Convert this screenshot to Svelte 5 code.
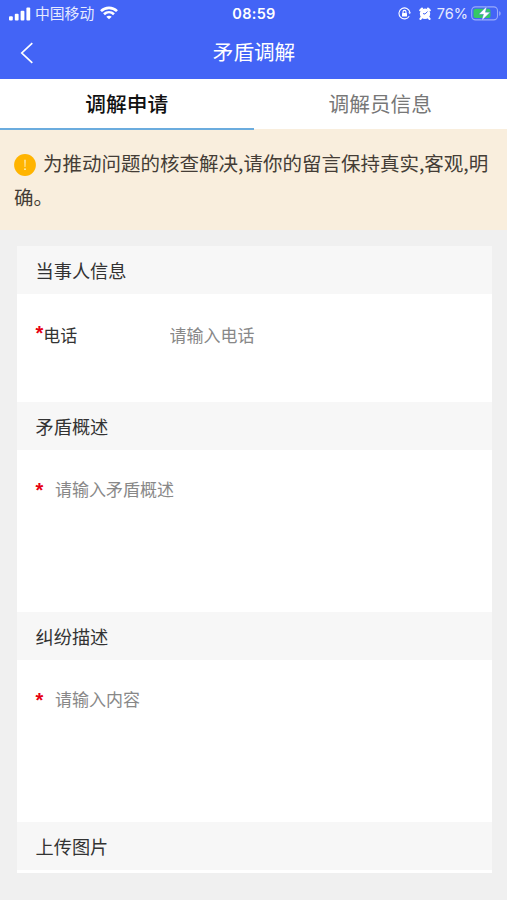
<script>
  let activeTab = $state(0);
  let phone = $state('');
  let summary = $state('');
  let detail = $state('');

  const tabs = ['调解申请', '调解员信息'];
</script>

<div class="page">
  <header>
    <div class="status">
      <div class="carrier">
        <svg width="22" height="14" viewBox="0 0 22 14" fill="#fff">
          <rect x="0" y="9.2" width="3.8" height="4.3" rx="1" />
          <rect x="5.8" y="6.8" width="3.8" height="6.7" rx="1" />
          <rect x="11.6" y="3.8" width="3.8" height="9.7" rx="1" />
          <rect x="17.4" y="0.5" width="3.8" height="13" rx="1" />
        </svg>
        <span>中国移动</span>
        <svg class="wifi" width="18" height="14" viewBox="0 0 18 14" fill="none" stroke="#fff">
          <path d="M1 5.1C5.5.7 12.5.7 17 5.1" stroke-width="2.7" />
          <path d="M4 8.3c2.9-2.7 7.1-2.7 10 0" stroke-width="2.6" />
          <path d="M9 13.3 6.3 10.7c1.5-1.4 3.9-1.4 5.4 0z" fill="#fff" stroke="none" />
        </svg>
      </div>
      <span class="time">08:59</span>
      <div class="device">
        <svg width="13" height="13" viewBox="0 0 13 13" fill="none" stroke="#fff" stroke-width="1.1">
          <path d="M11.9 5.3A5.5 5.5 0 1 0 11.2 9.3" />
          <path d="M10.3 5.2h2.5l-.9 2z" fill="#fff" stroke="none" />
          <rect x="4" y="5.9" width="5" height="3.5" rx=".5" fill="#fff" stroke="none" />
          <path d="M5 6V4.9a1.5 1.5 0 0 1 3 0V6" />
        </svg>
        <svg class="alarm" width="12" height="13" viewBox="0 0 12 13">
          <circle cx="6" cy="6.8" r="5.2" fill="#fff" />
          <path d="M1.3 3.2 3 1.6M10.7 3.2 9 1.6M2.5 10.5 1.5 11.9M9.5 10.5l1 1.4" stroke="#fff" stroke-width="2.2" stroke-linecap="round" />
          <path d="M8.5 4.5 6 7.1 4 6.5" fill="none" stroke="#4364f6" stroke-width="1" />
        </svg>
        <span class="percent">76%</span>
        <svg width="31" height="15" viewBox="0 0 31 15">
          <rect x=".7" y=".9" width="25.8" height="13" rx="3.8" fill="none" stroke="#9aabfa" stroke-width="1.1" />
          <path d="M28.2 5.2v4.5c1.9-.6 1.9-3.9 0-4.500z" fill="#9aabfa" />
          <rect x="2.5" y="2.7" width="17" height="9.4" rx="2" fill="#35c863" />
          <path d="M15.8.3 7.800 8.300h4.700L10.600 14.700l8.600-8.500h-4.800z" fill="#fff" stroke="#4364f6" stroke-width=".4" />
        </svg>
      </div>
    </div>
    <div class="nav">
      <button class="back" aria-label="返回">
        <svg width="14" height="22" viewBox="0 0 14 22" fill="none" stroke="#fff" stroke-width="1.7">
          <path d="M12.3 1.2 1.8 11 12.3 20.8" />
        </svg>
      </button>
      <h1>矛盾调解</h1>
    </div>
  </header>

  <nav class="tabs">
    {#each tabs as tab, i}
      <button class:active={activeTab === i} onclick={() => (activeTab = i)}>{tab}</button>
    {/each}
  </nav>

  <p class="notice">
    <svg class="warn" width="22" height="22" viewBox="0 0 22 22">
      <circle cx="11" cy="11" r="10.9" fill="#ffb400" />
      <path d="M10.3 5.8h1.4l-.3 7.2h-.8z" fill="#fff0c4" />
      <circle cx="11" cy="15.2" r=".9" fill="#fff0c4" />
    </svg>为推动问题的核查解决,请你的留言保持真实,客观,明确。
  </p>

  <main>
    <h2>当事人信息</h2>
    <div class="row">
      <label for="phone"><span class="required">*</span>电话</label>
      <input id="phone" type="tel" placeholder="请输入电话" bind:value={phone} />
    </div>

    <h2>矛盾概述</h2>
    <div class="area">
      <span class="required">*</span>
      <textarea placeholder="请输入矛盾概述" bind:value={summary}></textarea>
    </div>

    <h2>纠纷描述</h2>
    <div class="area">
      <span class="required">*</span>
      <textarea placeholder="请输入内容" bind:value={detail}></textarea>
    </div>

    <h2>上传图片</h2>
  </main>
</div>

<style>
  :global(body) { background: #f0f0f0; }
  .page {
    box-sizing: border-box;
    height: 900px;
    overflow: hidden;
    background: #f0f0f0;
    color: #333;
    font-family: 'Noto Sans CJK SC', sans-serif;
  }
  button, input, textarea {
    margin: 0;
    padding: 0;
    border: none;
    outline: none;
    background: none;
    font-family: inherit;
  }
  svg { display: block; flex: none; }

  header {
    height: 79px;
    background: #4364f6;
    color: #fff;
  }
  .status {
    display: grid;
    grid-template-columns: 1fr auto 1fr;
    align-items: center;
    height: 27px;
    padding: 0 5px 0 9px;
    line-height: 27px;
  }
  .carrier, .device { display: flex; align-items: center; }
  .carrier { font-size: 14.8px; color: #e6eaff; }
  .carrier span { margin: -1px 0 1px 4px; }
  .wifi { margin: -1px 0 1px 6px; }
  .time {
    margin-left: -3px;
    font: 600 14.5px/27px Inter, sans-serif;
    letter-spacing: 0.3px;
  }
  .device { justify-content: flex-end; }
  .alarm { margin-left: 8px; }
  .percent {
    margin: 0 3px 0 6px;
    font: 14.5px/27px Inter, sans-serif;
    color: #e6eaff;
  }
  .nav {
    display: grid;
    grid-template-columns: 61px 1fr 60px;
    align-items: center;
    height: 50px;
  }
  .back { padding: 1px 0 0 20px; }
  h1 {
    margin: -1px 0 1px;
    text-align: center;
    font-size: 20.6px;
    font-weight: 400;
    line-height: 50px;
  }

  .tabs {
    display: flex;
    height: 51px;
    background: linear-gradient(#fff 50px, #f9eedd 50px);
  }
  .tabs button {
    flex: 1;
    box-sizing: border-box;
    padding-bottom: 1px;
    border-bottom: 2px solid transparent;
    color: #777;
    font-size: 20.7px;
    line-height: 48px;
  }
  .tabs .active {
    border-bottom-color: #6bacde;
    color: #111;
    font-weight: 500;
  }

  .notice {
    box-sizing: border-box;
    height: 100px;
    margin: 0;
    padding: 16px 14px 0 14px;
    background: #f9eedd;
    color: #443d36;
    font-size: 19.5px;
    line-height: 34px;
  }
  .warn {
    display: inline-block;
    margin-right: 7px;
    vertical-align: -5px;
  }

  main {
    margin: 16px 15.5px 0 16.5px;
    padding-bottom: 3px;
    background: #fff;
  }
  h2 {
    height: 48px;
    margin: 0;
    padding-left: 19px;
    background: #f7f7f7;
    font-size: 18.2px;
    font-weight: 400;
    line-height: 48px;
  }
  .required {
    color: #e60012;
    font-family: 'Liberation Sans', sans-serif;
    font-size: 20px;
    font-weight: 700;
    line-height: 1;
  }
  .row {
    display: flex;
    height: 82px;
    padding: 26px 19px 0;
    font-size: 17px;
    line-height: 30px;
  }
  .row label { width: 134px; }
  .row .required { vertical-align: -3px; }
  .row .required { vertical-align: 2px; }
  .row input {
    flex: 1;
    min-width: 0;
    height: 28px;
    font-size: 17px;
  }
  .area {
    display: flex;
    height: 136px;
    padding: 26px 19px 0;
    font-size: 17px;
    line-height: 26px;
  }
  .area .required {
    width: 19.5px;
    padding-top: 4px;
  }
  textarea {
    flex: 1;
    height: 110px;
    resize: none;
    font-size: 17px;
    line-height: 26px;
  }
  input::placeholder, textarea::placeholder { color: #888; opacity: 1; }
</style>
